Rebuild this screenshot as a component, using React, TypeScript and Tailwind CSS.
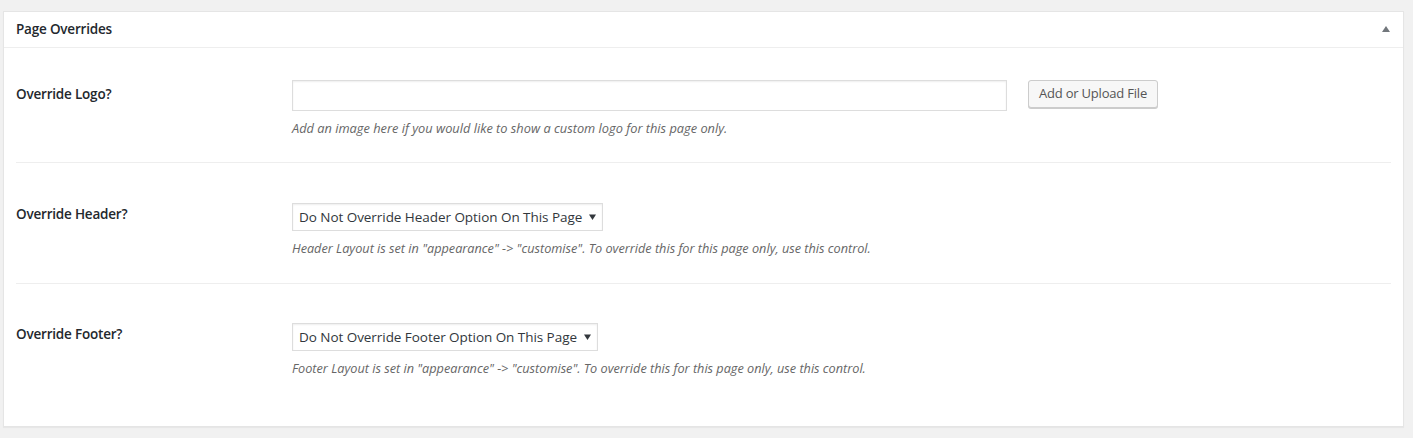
import React from "react";

const font = { fontFamily: '"Open Sans", "Noto Sans", "Liberation Sans", sans-serif' };

function Caret() {
  return (
    <svg width="7" height="6" viewBox="0 0 7 6" className="shrink-0">
      <path d="M0 0.5 H7 L3.5 6 Z" fill="#32373c" />
    </svg>
  );
}

function FakeSelect({ text, width }: { text: string; width: string }) {
  return (
    <div
      className={`flex h-[28px] items-center justify-between border border-[#ddd] bg-white pl-[6px] pr-[6px] text-[13.5px] text-[#32373c] shadow-[inset_0_1px_2px_rgba(0,0,0,0.07)] ${width}`}
    >
      <span className="whitespace-nowrap tracking-[-0.05px]">{text}</span>
      <Caret />
    </div>
  );
}

export default function App() {
  return (
    <div className="h-[438px] w-[1413px] bg-[#f1f1f1] pt-[11px]" style={font}>
      <div className="ml-[3px] h-[416px] w-[1401px] border border-[#e5e5e5] bg-white shadow-[0_1px_1px_rgba(0,0,0,0.04)]">
        <div className="flex h-[36px] items-center justify-between border-b border-[#eee] pl-[12px] pr-[13px]">
          <h2 className="text-[13.5px] font-semibold tracking-[-0.2px] text-[#23282d]">Page Overrides</h2>
          <svg width="8" height="6" viewBox="0 0 8 6" className="-mt-[1px]">
            <path d="M4 0 L8 6 H0 Z" fill="#72777c" />
          </svg>
        </div>
        <div className="px-[12px]">
          {/* Row 1 */}
          <div className="flex border-b border-[#eee] pt-[32px] pb-[24px]">
            <div className="w-[276px] shrink-0 pt-[4px] text-[13.5px] font-semibold tracking-[-0.2px] text-[#23282d]">
              Override Logo?
            </div>
            <div className="flex flex-col">
              <div className="flex items-start">
                <div className="h-[31px] w-[715px] border border-[#ddd] bg-white shadow-[inset_0_1px_2px_rgba(0,0,0,0.07)]" />
                <button className="ml-[21px] h-[28px] w-[130px] rounded-[3px] border border-[#ccc] bg-[#f7f7f7] text-[13px] tracking-[-0.2px] text-[#555] shadow-[0_1px_0_#ccc]">
                  Add or Upload File
                </button>
              </div>
              <p className="mt-[8px] text-[12.8px] italic text-[#666]">
                Add an image here if you would like to show a custom logo for this page only.
              </p>
            </div>
          </div>
          {/* Row 2 */}
          <div className="flex border-b border-[#eee] pt-[40px] pb-[25px]">
            <div className="w-[276px] shrink-0 pt-[1px] text-[13.5px] font-semibold tracking-[-0.2px] text-[#23282d]">
              Override Header?
            </div>
            <div className="flex flex-col">
              <FakeSelect text="Do Not Override Header Option On This Page" width="w-[311px]" />
              <p className="mt-[8px] text-[12.7px] italic text-[#666]">
                Header Layout is set in "appearance" -&gt; "customise". To override this for this page only, use this control.
              </p>
            </div>
          </div>
          {/* Row 3 */}
          <div className="flex pt-[39px]">
            <div className="w-[276px] shrink-0 pt-[1px] text-[13.5px] font-semibold tracking-[-0.2px] text-[#23282d]">
              Override Footer?
            </div>
            <div className="flex flex-col">
              <FakeSelect text="Do Not Override Footer Option On This Page" width="w-[306px]" />
              <p className="mt-[8px] text-[12.7px] italic text-[#666]">
                Footer Layout is set in "appearance" -&gt; "customise". To override this for this page only, use this control.
              </p>
            </div>
          </div>
        </div>
      </div>
    </div>
  );
}
